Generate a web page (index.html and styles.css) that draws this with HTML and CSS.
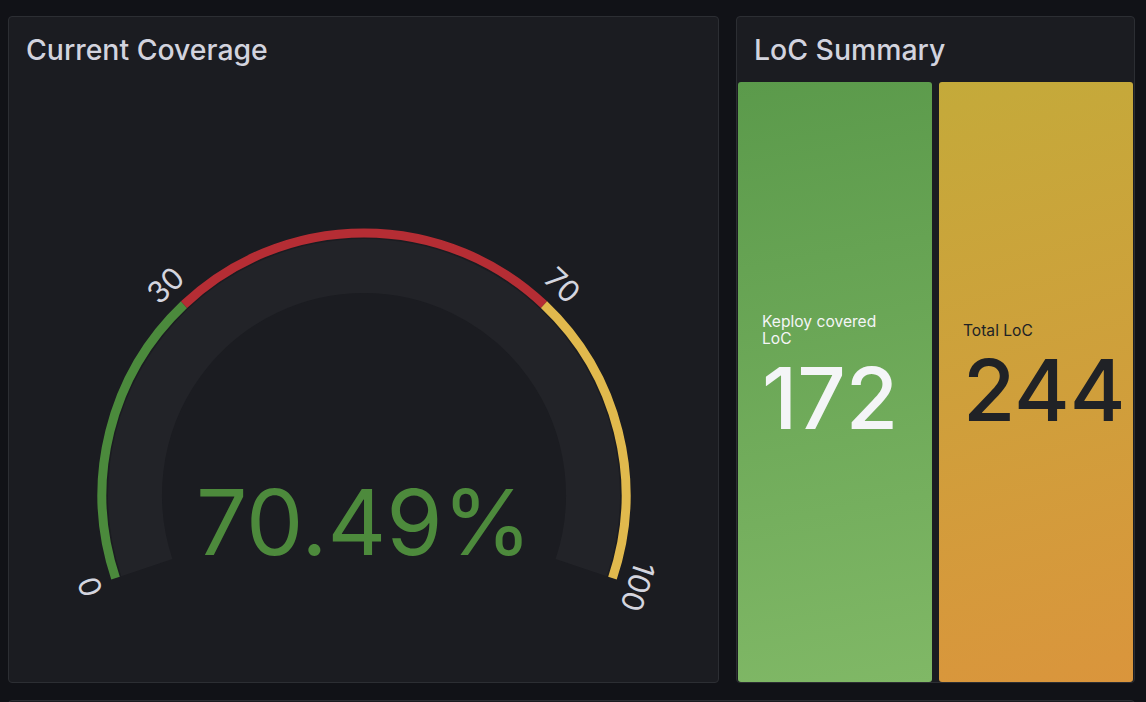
FILE: index.html
```html
<!DOCTYPE html>
<html lang="en">
<head>
<meta charset="utf-8">
<title>Coverage Dashboard</title>
<link rel="stylesheet" href="styles.css">
</head>
<body>
<div class="dashboard">
  <section class="panel gauge-panel">
    <header class="panel-title">Current Coverage</header>
    <div class="gauge-body">
      <svg class="gauge" viewBox="0 0 709 615" width="709" height="615">
        <path class="gauge-track" d="M137.83 500.66 A229 229 0 1 1 572.17 500.66"/>
        <path class="band band-green" d="M106.54 511.13 A262 262 0 0 1 174.98 237.64"/>
        <path class="band band-red" d="M174.98 237.64 A262 262 0 0 1 535.02 237.64"/>
        <path class="band band-yellow" d="M535.02 237.64 A262 262 0 0 1 603.46 511.13"/>
        <text class="tick" transform="translate(80.9 519.8) rotate(-108.5)">0</text>
        <text class="tick" transform="translate(156.4 218.0) rotate(-43.4)">30</text>
        <text class="tick" transform="translate(553.6 218.0) rotate(43.4)">70</text>
        <text class="tick" transform="translate(629.1 519.8) rotate(108.5)">100</text>
        <text class="gauge-value" x="355" y="488">70.49%</text>
      </svg>
    </div>
  </section>
  <section class="panel stat-panel">
    <header class="panel-title">LoC Summary</header>
    <div class="stats">
      <div class="stat stat-green">
        <div class="stat-label">Keploy covered LoC</div>
        <div class="stat-value">172</div>
      </div>
      <div class="stat stat-yellow">
        <div class="stat-label">Total LoC</div>
        <div class="stat-value">244</div>
      </div>
    </div>
  </section>
  <section class="panel panel-wide"></section>
</div>
</body>
</html>
```

FILE: styles.css
```css
html, body {
  margin: 0;
  height: 100%;
  overflow: hidden;
  background: #111217;
}

.dashboard {
  display: grid;
  grid-template-columns: 711px 399px;
  grid-template-rows: 667px 300px;
  column-gap: 17px;
  row-gap: 17px;
  padding: 16px 0 0 8px;
  font-family: Inter, "Noto Sans", "Liberation Sans", sans-serif;
}

.panel {
  box-sizing: border-box;
  background: #1b1c21;
  border: 1px solid #2c2e33;
  border-radius: 4px;
  display: flex;
  flex-direction: column;
  overflow: hidden;
}

.panel-wide {
  grid-column: 1 / -1;
}

.panel-title {
  font-size: 28.4px;
  font-weight: 500;
  line-height: 34px;
  color: #d2d3de;
  padding: 16px 17px 0;
}

.gauge-body {
  flex: 1;
}

.gauge {
  display: block;
}

.gauge-track {
  fill: none;
  stroke: #222328;
  stroke-width: 54;
}

.band {
  fill: none;
  stroke-width: 9;
}

.band-green { stroke: #4b8a3c; }
.band-red { stroke: #b52d34; }
.band-yellow { stroke: #e1b94d; }

.tick {
  fill: #d4d5df;
  font-family: Inter, "Noto Sans", sans-serif;
  font-size: 30px;
  text-anchor: middle;
  dominant-baseline: central;
}

.gauge-value {
  fill: #4d8a3c;
  font-family: Inter, "Noto Sans", sans-serif;
  font-size: 91px;
  text-anchor: middle;
}

.stats {
  flex: 1;
  display: flex;
  gap: 7px;
  padding: 15px 1px 0;
}

.stat {
  flex: 1 1 0;
  min-width: 0;
  border-radius: 3px;
  display: flex;
  flex-direction: column;
  justify-content: center;
  padding: 0 10px 10px 24px;
}

.stat-green {
  background: linear-gradient(170deg, #5b9a4b 0%, #80b866 100%);
  color: #f4f5f7;
}

.stat-yellow {
  background: linear-gradient(165deg, #c4aa3a 0%, #da953c 100%);
  color: #202226;
}

.stat-label {
  font-size: 15.6px;
  line-height: 17px;
  max-width: 130px;
}

.stat-value {
  font-size: 85px;
  font-weight: 500;
  line-height: 85px;
  margin-top: 9px;
  white-space: nowrap;
}
```
